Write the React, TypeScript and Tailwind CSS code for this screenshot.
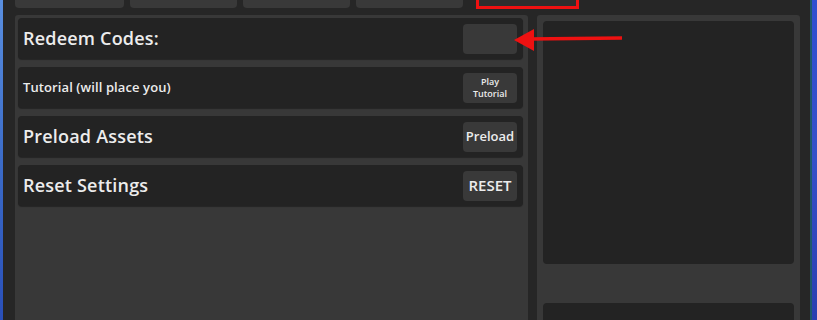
import React from "react";

const font = { fontFamily: '"Open Sans", "Noto Sans", sans-serif' };

function Row({ label, small, children }: { label: string; small?: boolean; children: React.ReactNode }) {
  return (
    <div className="h-[41px] rounded-[4px] bg-[#232323] flex items-center justify-between pl-[5px] pr-[6px] shadow-[0_1px_1px_rgba(0,0,0,0.35)]">
      <span
        className={
          small
            ? "text-[13px] font-semibold text-[#ececec] tracking-[0.1px]"
            : "text-[18px] font-semibold text-[#ececec] tracking-[0.2px]"
        }
      >
        {label}
      </span>
      {children}
    </div>
  );
}

function Btn({ children, cls = "" }: { children?: React.ReactNode; cls?: string }) {
  return (
    <div className={"w-[54px] h-[30px] rounded-[4px] bg-[#393939] flex items-center justify-center text-[#ececec] font-semibold " + cls}>
      {children}
    </div>
  );
}

export default function App() {
  return (
    <div className="w-[817px] h-[320px] overflow-hidden relative flex bg-[#262626]" style={font}>
      <div className="w-[3px] h-full bg-gradient-to-b from-[#5a8fe0] via-[#3c6cc8] to-[#2a4fb8]" />
      <div className="w-[807px] h-full bg-[#262626] flex flex-col">
        <div className="h-[8px] flex gap-[6px] pl-[12px]">
          <div className="w-[109px] h-full rounded-b-[4px] bg-[#393939]" />
          <div className="w-[107px] h-full rounded-b-[4px] bg-[#393939]" />
          <div className="w-[107px] h-full rounded-b-[4px] bg-[#393939]" />
          <div className="w-[107px] h-full rounded-b-[4px] bg-[#393939]" />
          <div className="w-[103px] h-[9px] ml-[7px] border-[3px] border-t-0 border-[#ee1111] bg-[#2e2e2e]" />
        </div>
        <div className="mt-[7px] flex flex-1">
          <div className="ml-[12px] w-[513px] bg-[#383838] rounded-t-[3px] pt-[3px] pl-[3px] pr-[5px] flex flex-col gap-[8px]">
            <Row label="Redeem Codes:">
              <Btn />
            </Row>
            <Row label="Tutorial (will place you)" small>
              <Btn cls="flex-col text-[9px] leading-[12px]">
                <span>Play</span>
                <span>Tutorial</span>
              </Btn>
            </Row>
            <Row label="Preload Assets">
              <Btn cls="text-[13px]">Preload</Btn>
            </Row>
            <Row label="Reset Settings">
              <Btn cls="text-[15px] font-bold">RESET</Btn>
            </Row>
          </div>
          <div className="ml-[9px] w-[263px] bg-[#383838] rounded-t-[3px] pt-[6px] px-[6px] flex flex-col">
            <div className="h-[243px] rounded-[4px] bg-[#232323]" />
            <div className="mt-[39px] flex-1 rounded-t-[4px] bg-[#232323]" />
          </div>
        </div>
      </div>
      <div className="w-[7px] h-full bg-gradient-to-b from-[#2f4fd0] via-[#3550c8] to-[#2a3fb0] border-l-[2px] border-[#1e5a6a]" />
      <svg className="absolute left-0 top-0 pointer-events-none" width="817" height="320">
        <line x1="528" y1="39" x2="622" y2="38" stroke="#ee1111" strokeWidth="3.5" />
        <polygon points="514,40 534,29 534,51" fill="#ee1111" />
      </svg>
    </div>
  );
}
